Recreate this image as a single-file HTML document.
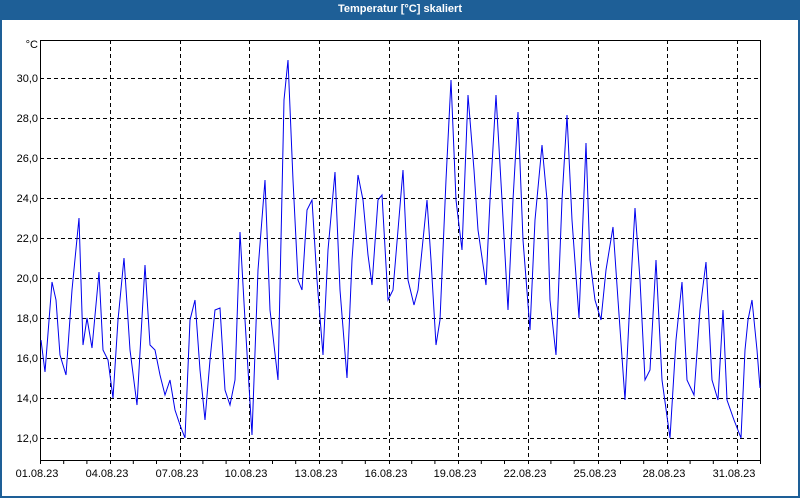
<!DOCTYPE html>
<html><head><meta charset="utf-8"><style>
html,body{margin:0;padding:0;width:800px;height:500px;overflow:hidden;background:#fff;}
#wrap{position:absolute;left:0;top:0;width:796px;height:496px;border:2px solid #1e5f97;border-top:none;}
#title{position:absolute;left:0;top:0;width:800px;height:20px;background:#1e5f97;color:#fff;font:bold 11px "Liberation Sans",sans-serif;text-align:center;line-height:19px;}
svg{position:absolute;left:0;top:0;}
text{font-family:"Liberation Sans",sans-serif;font-size:11px;fill:#000;}
</style></head><body>
<div id="wrap"></div>
<div id="title">Temperatur [°C] skaliert</div>
<svg width="800" height="500">
<g stroke="#000" stroke-width="1" stroke-dasharray="4,3" fill="none">
<line x1="40" x2="760" y1="78.5" y2="78.5"/><line x1="40" x2="760" y1="118.5" y2="118.5"/>
<line x1="40" x2="760" y1="158.5" y2="158.5"/><line x1="40" x2="760" y1="198.5" y2="198.5"/>
<line x1="40" x2="760" y1="238.5" y2="238.5"/><line x1="40" x2="760" y1="278.5" y2="278.5"/>
<line x1="40" x2="760" y1="318.5" y2="318.5"/><line x1="40" x2="760" y1="358.5" y2="358.5"/>
<line x1="40" x2="760" y1="398.5" y2="398.5"/><line x1="40" x2="760" y1="438.5" y2="438.5"/>
<line y1="40" y2="460" x1="110.5" x2="110.5"/><line y1="40" y2="460" x1="180.5" x2="180.5"/>
<line y1="40" y2="460" x1="249.5" x2="249.5"/><line y1="40" y2="460" x1="319.5" x2="319.5"/>
<line y1="40" y2="460" x1="389.5" x2="389.5"/><line y1="40" y2="460" x1="458.5" x2="458.5"/>
<line y1="40" y2="460" x1="528.5" x2="528.5"/><line y1="40" y2="460" x1="598.5" x2="598.5"/>
<line y1="40" y2="460" x1="667.5" x2="667.5"/><line y1="40" y2="460" x1="737.5" x2="737.5"/>
</g>
<rect x="40.5" y="40.5" width="720" height="420" fill="none" stroke="#000"/>
<g stroke="#000">
<path d="M40.5 461v3M63.7 461v3M86.9 461v3M110.5 461v3M133.3 461v3M156.5 461v3M180.5 461v3M202.9 461v3M226.1 461v3M249.5 461v3M272.5 461v3M295.7 461v3M319.5 461v3M342.1 461v3M365.3 461v3M389.5 461v3M411.7 461v3M434.9 461v3M458.5 461v3M481.3 461v3M504.5 461v3M528.5 461v3M550.9 461v3M574.1 461v3M598.5 461v3M620.5 461v3M643.7 461v3M667.5 461v3M690.1 461v3M713.3 461v3M737.5 461v3M760.5 461v3"/>
</g>
<g text-anchor="end">
<text x="38" y="48">°C</text>
<text x="38" y="82">30,0</text><text x="38" y="122">28,0</text><text x="38" y="162">26,0</text>
<text x="38" y="202">24,0</text><text x="38" y="242">22,0</text><text x="38" y="282">20,0</text>
<text x="38" y="322">18,0</text><text x="38" y="362">16,0</text><text x="38" y="402">14,0</text>
<text x="38" y="442">12,0</text>
</g>
<g text-anchor="middle">
<text x="37" y="477">01.08.23</text><text x="107" y="477">04.08.23</text><text x="177" y="477">07.08.23</text>
<text x="246" y="477">10.08.23</text><text x="316" y="477">13.08.23</text><text x="386" y="477">16.08.23</text>
<text x="455" y="477">19.08.23</text><text x="525" y="477">22.08.23</text><text x="595" y="477">25.08.23</text>
<text x="664" y="477">28.08.23</text><text x="734" y="477">31.08.23</text>
</g>
<polyline fill="none" stroke="#0000ee" stroke-width="1" points="41,340 45,372 52,282 56,300 60,355 66,375 72,290 79,218 83,345 87,318 92,348 99,272 103,350 108,360 113,398 118,320 124,258 130,350 137,405 145,265 150,345 155,350 160,375 165,395 170,380 175,410 180,425 185,438 190,320 195,300 200,370 205,420 210,360 215,310 220,308 225,390 230,405 235,380 240,232 245,320 252,435 258,270 265,180 270,310 278,380 284,100 288,60 293,180 298,280 302,290 307,210 312,200 317,280 323,355 328,250 335,172 340,290 347,378 352,260 358,175 363,200 368,255 372,285 378,200 382,195 388,300 393,290 398,230 403,170 408,280 414,305 418,290 422,250 427,200 431,260 436,345 440,320 446,180 451,80 456,200 462,250 468,95 474,170 478,230 486,285 490,200 496,95 502,200 508,310 513,200 518,112 523,240 530,330 535,220 542,145 547,200 550,300 556,355 562,200 567,115 572,220 579,318 586,143 590,260 595,300 601,320 606,270 613,227 618,300 625,400 630,300 635,208 640,280 645,380 650,370 656,260 662,380 670,438 676,340 682,282 687,380 694,395 700,310 706,262 712,380 718,400 723,310 727,400 734,420 741,438 745,350 748,320 752,300 757,350 760,388"/>
</svg>
</body></html>
